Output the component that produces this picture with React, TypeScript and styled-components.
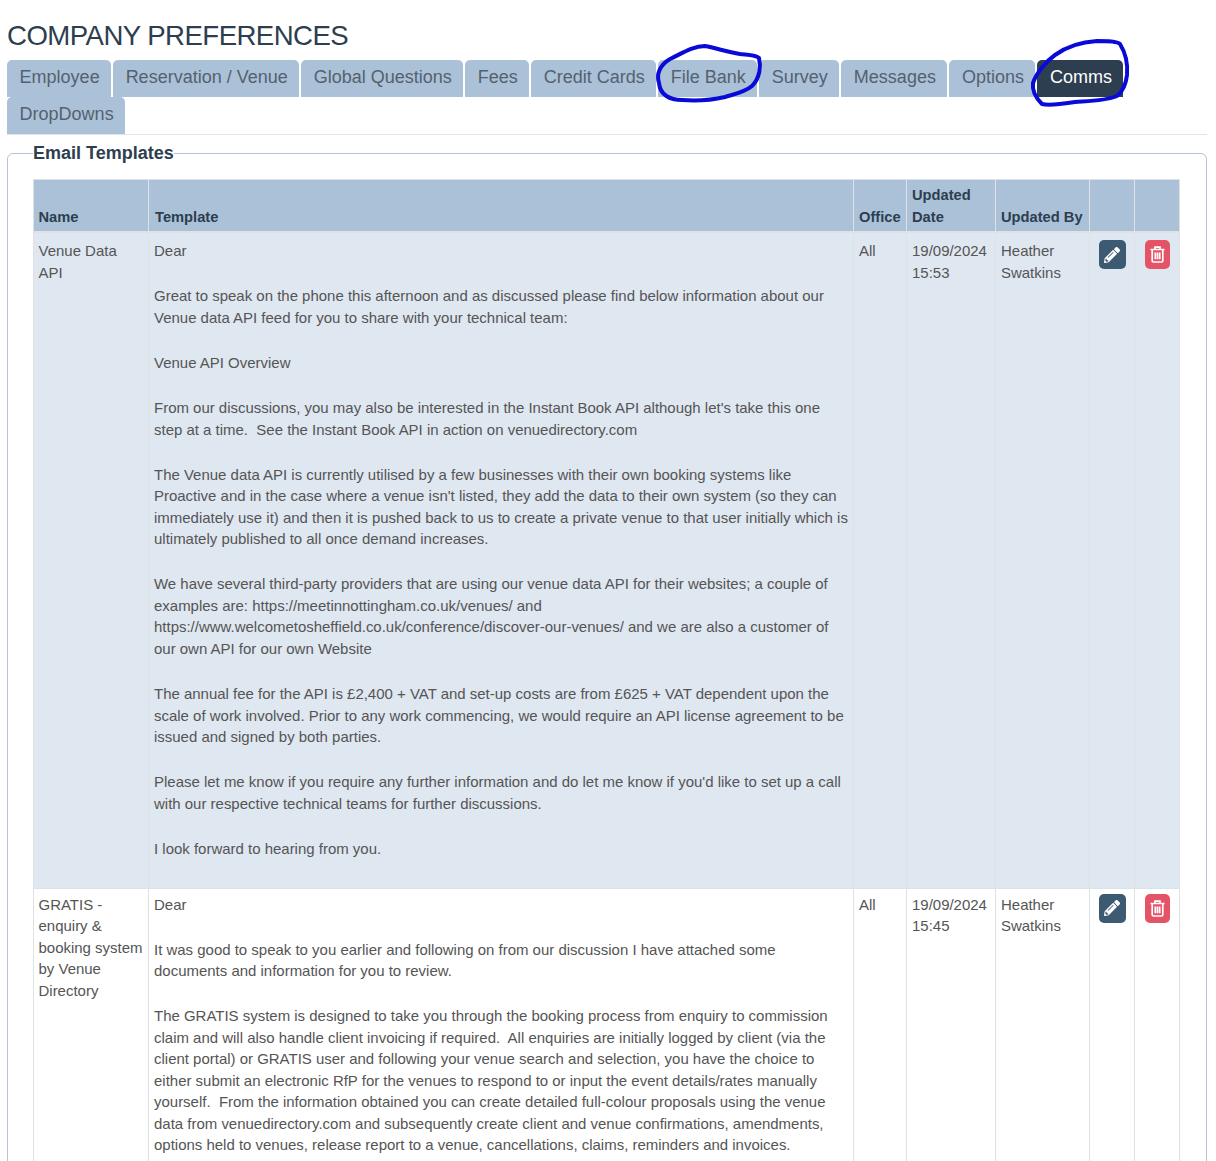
import React from 'react';
import styled, { createGlobalStyle } from 'styled-components';

const GlobalStyle = createGlobalStyle`
  html, body {
    margin: 0;
    padding: 0;
    height: 1161px;
    overflow: hidden;
    background: #fff;
  }
  body {
    font-family: "Liberation Sans", Arial, sans-serif;
    color: #555;
  }
`;

const Page = styled.div`
  position: relative;
  height: 1161px;
  overflow: hidden;
  padding: 18px 9px 0 7px;
  box-sizing: border-box;
`;

const Title = styled.h1`
  margin: 0 0 6px;
  font-size: 27.6px;
  letter-spacing: -0.55px;
  line-height: 36px;
  font-weight: 400;
  color: #2c3e50;
`;

const Tabs = styled.div`
  display: flex;
  flex-wrap: wrap;
  gap: 0.5px 2px;
  border-bottom: 1px solid #e1e3ea;
  margin-bottom: 8.5px;
`;

const Tab = styled.a<{ $active?: boolean }>`
  display: block;
  height: 36.5px;
  line-height: 34.5px;
  padding: 0 11.4px 0 12.6px;
  font-size: 18px;
  border-radius: 5px 5px 0 0;
  background: ${p => (p.$active ? '#2c3e50' : '#abc1d8')};
  color: ${p => (p.$active ? '#fff' : '#54616f')};
`;

const Fieldset = styled.fieldset`
  margin: 0;
  padding: 15px 26px 0 25px;
  border: 1px solid #b4c4d6;
  border-radius: 6px;
  min-width: 0;
`;

const Legend = styled.legend`
  padding: 0;
  margin: 0;
  font-size: 18px;
  line-height: 21px;
  font-weight: 700;
  color: #2c3e50;
`;

const Table = styled.table`
  width: 1146px;
  table-layout: fixed;
  border-collapse: collapse;
  font-size: 14.97px;
  line-height: 21.5px;
`;

const HeadCell = styled.th`
  background: #abc1d8;
  color: #2c3e50;
  font-size: 14.7px;
  font-weight: 700;
  text-align: left;
  vertical-align: bottom;
  padding: 4px 5px 3px;
  border: 1px solid #dee2e6;
  border-bottom: 2px solid #dee2e6;
  line-height: 22px;

  &:first-child {
    padding-left: 4.5px;
  }
  &:nth-child(2) {
    padding-left: 6px;
  }
`;

const Row = styled.tr<{ $shaded?: boolean }>`
  background: ${p => (p.$shaded ? '#dfe7f1' : '#fff')};
`;

const Cell = styled.td<{ $first?: boolean }>`
  vertical-align: top;
  padding: ${p => (p.$first ? '7px' : '5px')} 5px 28px;
  border: 1px solid #dee2e6;
  color: #555;
`;

const NameCell = styled(Cell)`
  padding-left: 4.5px;
  padding-right: 4px;
`;

const TemplateCell = styled(Cell)`
  padding-right: 2px;
`;

const IconCell = styled(Cell)`
  text-align: center;
  padding-left: 0;
  padding-right: 0;
`;

const Para = styled.p`
  margin: 0 0 23.7px;
  &:last-child {
    margin-bottom: 0;
  }
`;

const IconButton = styled.button<{ $danger?: boolean }>`
  display: inline-flex;
  align-items: center;
  justify-content: center;
  width: ${p => (p.$danger ? '25px' : '27px')};
  height: 29px;
  padding: 0;
  border: 0;
  border-radius: 5px;
  background: ${p => (p.$danger ? '#e55366' : '#3d5a73')};
  color: #fff;
`;

const Scribbles = styled.svg`
  position: absolute;
  left: 0;
  top: 0;
  pointer-events: none;
`;

const PencilIcon = () => (
  <svg width="16" height="16" viewBox="0 0 512 512" fill="currentColor">
    <path d="M497.9 142.1l-46.1 46.1c-4.7 4.7-12.3 4.7-17 0l-111-111c-4.7-4.7-4.7-12.3 0-17l46.1-46.1c18.7-18.7 49.1-18.7 67.9 0l60.1 60.1c18.8 18.7 18.8 49.1 0 67.9zM284.2 99.8L21.6 362.4.4 483.9c-2.9 16.4 11.4 30.6 27.8 27.8l121.5-21.3 262.6-262.6c4.7-4.7 4.7-12.3 0-17l-111-111c-4.8-4.7-12.4-4.7-17.1 0zM124.1 339.9c-5.5-5.5-5.5-14.3 0-19.8l154-154c5.5-5.5 14.3-5.5 19.8 0s5.5 14.3 0 19.8l-154 154c-5.5 5.5-14.3 5.5-19.8 0zM88 424h48v36.3l-64.5 11.3-31.1-31.1L51.7 376H88v48z" />
  </svg>
);

const TrashIcon = () => (
  <svg width="15" height="17" viewBox="0 0 15 17" fill="none" stroke="currentColor" strokeWidth="1.7">
    <path d="M.5 3.5h14M5 3.3V1.2h5v2.1M2.2 3.5v11.2c0 .8.5 1.3 1.2 1.3h8.2c.7 0 1.2-.5 1.2-1.3V3.5M5.3 6.5v6.8M7.5 6.5v6.8M9.7 6.5v6.8" />
  </svg>
);

const tabs = ['Employee', 'Reservation / Venue', 'Global Questions', 'Fees', 'Credit Cards', 'File Bank', 'Survey', 'Messages', 'Options', 'Comms', 'DropDowns'];

const venueParagraphs = [
  'Dear',
  'Great to speak on the phone this afternoon and as discussed please find below information about our Venue data API feed for you to share with your technical team:',
  'Venue API Overview',
  "From our discussions, you may also be interested in the Instant Book API although let's take this one step at a time.\u00a0 See the Instant Book API in action on venuedirectory.com",
  "The Venue data API is currently utilised by a few businesses with their own booking systems like Proactive and in the case where a venue isn't listed, they add the data to their own system (so they can immediately use it) and then it is pushed back to us to create a private venue to that user initially which is ultimately published to all once demand increases.",
  'We have several third-party providers that are using our venue data API for their websites; a couple of examples are: https://meetinnottingham.co.uk/venues/ and https://www.welcometosheffield.co.uk/conference/discover-our-venues/ and we are also a customer of our own API for our own Website',
  'The annual fee for the API is £2,400 + VAT and set-up costs are from £625 + VAT dependent upon the scale of work involved. Prior to any work commencing, we would require an API license agreement to be issued and signed by both parties.',
  "Please let me know if you require any further information and do let me know if you'd like to set up a call with our respective technical teams for further discussions.",
  'I look forward to hearing from you.',
];

const gratisParagraphs = [
  'Dear',
  'It was good to speak to you earlier and following on from our discussion I have attached some documents and information for you to review.',
  'The GRATIS system is designed to take you through the booking process from enquiry to commission claim and will also handle client invoicing if required.\u00a0 All enquiries are initially logged by client (via the client portal) or GRATIS user and following your venue search and selection, you have the choice to either submit an electronic RfP for the venues to respond to or input the event details/rates manually yourself.\u00a0 From the information obtained you can create detailed full-colour proposals using the venue data from venuedirectory.com and subsequently create client and venue confirmations, amendments, options held to venues, release report to a venue, cancellations, claims, reminders and invoices.',
];

const templates = [
  { name: 'Venue Data API', paragraphs: venueParagraphs, date: '19/09/2024 15:53' },
  { name: 'GRATIS - enquiry & booking system by Venue Directory', paragraphs: gratisParagraphs, date: '19/09/2024 15:45' },
];

export default function App() {
  return (
    <Page>
      <GlobalStyle />
      <Title>COMPANY PREFERENCES</Title>
      <Tabs>
        {tabs.map(t => (
          <Tab key={t} $active={t === 'Comms'}>{t}</Tab>
        ))}
      </Tabs>
      <Fieldset>
        <Legend>Email Templates</Legend>
        <Table>
          <colgroup>
            <col style={{ width: 115 }} />
            <col style={{ width: 705 }} />
            <col style={{ width: 53 }} />
            <col style={{ width: 89 }} />
            <col style={{ width: 94 }} />
            <col style={{ width: 45 }} />
            <col style={{ width: 45 }} />
          </colgroup>
          <thead>
            <tr>
              <HeadCell>Name</HeadCell>
              <HeadCell>Template</HeadCell>
              <HeadCell>Office</HeadCell>
              <HeadCell>Updated Date</HeadCell>
              <HeadCell>Updated By</HeadCell>
              <HeadCell />
              <HeadCell />
            </tr>
          </thead>
          <tbody>
            {templates.map((row, i) => (
              <Row key={row.name} $shaded={i === 0}>
                <NameCell $first={i === 0}>{row.name}</NameCell>
                <TemplateCell $first={i === 0}>
                  {row.paragraphs.map(p => (
                    <Para key={p}>{p}</Para>
                  ))}
                </TemplateCell>
                <Cell $first={i === 0}>All</Cell>
                <Cell $first={i === 0}>{row.date}</Cell>
                <Cell $first={i === 0}>Heather Swatkins</Cell>
                <IconCell $first={i === 0}>
                  <IconButton><PencilIcon /></IconButton>
                </IconCell>
                <IconCell $first={i === 0}>
                  <IconButton $danger><TrashIcon /></IconButton>
                </IconCell>
              </Row>
            ))}
          </tbody>
        </Table>
      </Fieldset>
      <Scribbles width="1216" height="130" viewBox="0 0 1216 130" fill="none" stroke="#0a0ad8" strokeWidth="4" strokeLinecap="round" strokeLinejoin="round">
        <path d="M659 83C656 74 660 65 670 59C681 54 692 46 705 46C716 48 727 52 740 54C748 55 756 55 759 58C761 66 760 78 752 86C745 92 735 94 725 97C712 100 695 101 682 100C670 100 660 95 659 83Z" />
        <path d="M1042 104C1036 98 1032 90 1033 83C1036 74 1045 62 1055 55C1066 47 1081 42 1097 41C1107 41 1117 41 1120 44C1125 52 1128 63 1127 75C1126 84 1122 92 1117 96C1105 101 1090 101 1075 102C1062 104 1050 106 1042 104Z" />
      </Scribbles>
    </Page>
  );
}
